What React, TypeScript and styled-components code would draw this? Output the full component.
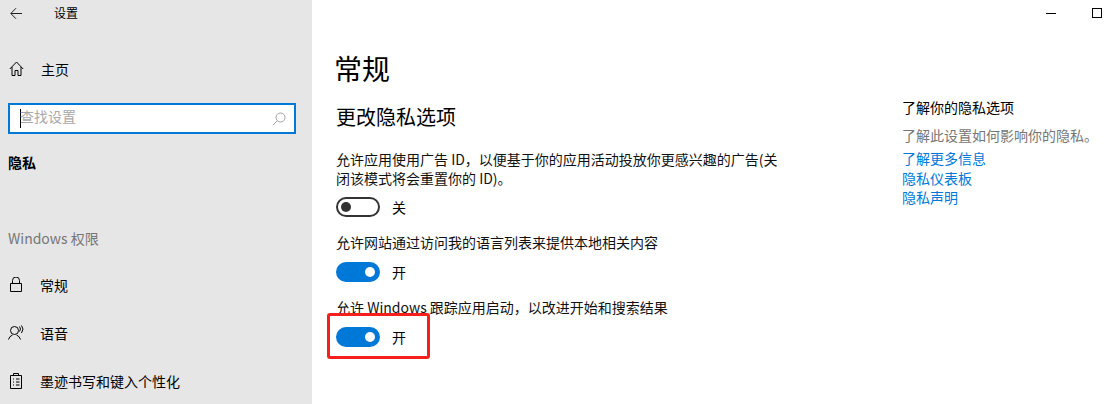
import React from 'react';
import styled, { createGlobalStyle } from 'styled-components';

const Global = createGlobalStyle`
  html, body { margin: 0; padding: 0; background: #fff; }
  body { font-family: "Noto Sans CJK SC", "Noto Sans", sans-serif; color: #000; overflow: hidden; }
`;

const Window = styled.div`
  display: flex;
  width: 1119px;
  height: 404px;
  overflow: hidden;
`;

const Sidebar = styled.nav`
  width: 312px;
  flex: none;
  height: 404px;
  background: #e6e6e6;
  display: flex;
  flex-direction: column;
  overflow: hidden;
`;

const TitleRow = styled.div`
  display: flex;
  align-items: center;
  height: 26px;
  padding-left: 10px;
  font-size: 12px;
  line-height: 26px;
`;

const AppTitle = styled.span`
  margin-left: 31px;
`;

const NavRow = styled.div<{ $top: number; $textGap: number }>`
  display: flex;
  align-items: center;
  height: 24px;
  margin-top: ${p => p.$top}px;
  padding-left: 8px;
  font-size: 14px;
  line-height: 24px;
  svg { flex: none; margin-right: ${p => p.$textGap}px; }
`;

const SearchBox = styled.div`
  display: flex;
  align-items: center;
  justify-content: space-between;
  box-sizing: border-box;
  width: 288px;
  height: 31px;
  margin: 22px 0 0 8px;
  padding: 0 8px 0 10px;
  background: #fff;
  border: 2px solid #0078d7;
`;

const Placeholder = styled.span`
  border-left: 1px solid #000;
  height: 19px;
  font-size: 14px;
  line-height: 15px;
  text-indent: -1px;
  color: #a8a8a8;
`;

const SectionName = styled.div`
  margin: 16px 0 0 8px;
  font-size: 14px;
  font-weight: 700;
  line-height: 24px;
`;

const GroupLabel = styled.div`
  margin: 52px 0 0 8px;
  font-family: "Noto Sans CJK SC", sans-serif;
  font-size: 14px;
  line-height: 24px;
  color: #767676;
`;

const Main = styled.main`
  flex: none;
  width: 442px;
  padding: 47px 0 0 24px;
`;

const PageTitle = styled.h1`
  margin: 0 0 0 -2px;
  font-size: 28px;
  font-weight: 400;
  line-height: 42px;
`;

const SubTitle = styled.h2`
  margin: 13px 0 0;
  font-size: 20px;
  font-weight: 400;
  line-height: 30px;
`;

const Setting = styled.section<{ $top: number }>`
  margin-top: ${p => p.$top}px;
`;

const SettingText = styled.p`
  margin: 0;
  font-size: 14px;
  line-height: 19px;
  color: #111;
`;

const ToggleRow = styled.div<{ $top: number }>`
  display: flex;
  align-items: center;
  gap: 12px;
  height: 20px;
  margin-top: ${p => p.$top}px;
  font-size: 14px;
`;

const ToggleRoot = styled.span<{ $on: boolean }>`
  position: relative;
  display: block;
  box-sizing: border-box;
  width: 44px;
  height: 20px;
  border-radius: 10px;
  background: ${p => (p.$on ? '#0078d7' : '#fff')};
  border: 2px solid ${p => (p.$on ? '#0078d7' : '#333')};
`;

const Knob = styled.span<{ $on: boolean }>`
  position: absolute;
  top: 3px;
  left: ${p => (p.$on ? '27px' : '3px')};
  width: 10px;
  height: 10px;
  border-radius: 50%;
  background: ${p => (p.$on ? '#fff' : '#333')};
`;

const Highlight = styled.div`
  position: absolute;
  left: 327px;
  top: 313px;
  width: 103px;
  height: 46px;
  box-sizing: border-box;
  border: 3px solid #f5201c;
  border-radius: 3px;
  pointer-events: none;
`;

const Aside = styled.aside`
  flex: none;
  width: 217px;
  margin-left: 124px;
`;

const WindowButtons = styled.div`
  display: flex;
  justify-content: flex-end;
  align-items: center;
  gap: 36px;
  height: 26px;
  padding-right: 17px;
`;

const MinimizeIcon = styled.span`
  display: block;
  width: 10px;
  height: 1px;
  background: #000;
`;

const MaximizeIcon = styled.span`
  display: block;
  box-sizing: border-box;
  width: 10px;
  height: 10px;
  border: 1px solid #000;
`;

const AsideTitle = styled.div`
  margin-top: 71px;
  font-size: 14px;
  line-height: 20px;
  white-space: nowrap;
`;

const AsideText = styled.div`
  margin-top: 8px;
  font-size: 14px;
  line-height: 20px;
  color: #767676;
  white-space: nowrap;
`;

const AsideLinks = styled.div`
  display: flex;
  flex-direction: column;
  margin-top: 4px;
`;

const AsideLink = styled.a`
  font-size: 14px;
  line-height: 19.5px;
  color: #0078d7;
`;

const Toggle = ({ on, top }: { on: boolean; top: number }) => (
  <ToggleRow $top={top}>
    <ToggleRoot $on={on}><Knob $on={on} /></ToggleRoot>
    {on ? '开' : '关'}
  </ToggleRow>
);

const line = { fill: 'none', stroke: '#000', strokeWidth: 1 };

export default function App() {
  return (
    <Window>
      <Global />
      <Sidebar>
        <TitleRow>
          <svg width="13" height="13" viewBox="0 0 13 13" {...line} stroke="#222">
            <path d="M12 6.5H1M6 1.2 .8 6.5 6 11.8" />
          </svg>
          <AppTitle>设置</AppTitle>
        </TitleRow>
        <NavRow $top={31} $textGap={17}>
          <svg width="16" height="16" viewBox="0 0 16 16" {...line}>
            <path d="M1.800 8 8.500 1l6.700 7M4 6v8.500h3V9.500h3v5h3V6" />
          </svg>
          主页
        </NavRow>
        <SearchBox>
          <Placeholder>查找设置</Placeholder>
          <svg width="14" height="14" viewBox="0 0 14 14" fill="none" stroke="#a0a0a0">
            <circle cx="8.5" cy="5.5" r="4.5" />
            <path d="M5.2 8.8.8 13.2" />
          </svg>
        </SearchBox>
        <SectionName>隐私</SectionName>
        <GroupLabel>Windows 权限</GroupLabel>
        <NavRow $top={23} $textGap={16}>
          <svg width="16" height="16" viewBox="0 0 16 16" {...line}>
            <path d="M2.500 6.500h11v8h-11zM4.500 6.500V3.500a3.500 3.500 0 0 1 7 0v3" />
          </svg>
          常规
        </NavRow>
        <NavRow $top={24} $textGap={15}>
          <svg width="17" height="16" viewBox="0 0 17 16" {...line}>
            <circle cx="6.500" cy="5.500" r="4" />
            <path d="M.5 14.500a6.500 6.500 0 0 1 4-4.500M8.500 10a6.500 6.500 0 0 1 4 4.500M11.500 1.500q2 2.500 0 5M13.500 .5q3 3.500 0 7.500" />
          </svg>
          语音
        </NavRow>
        <NavRow $top={24} $textGap={16}>
          <svg width="16" height="16" viewBox="0 0 16 16" {...line}>
            <path d="M2.500 2.500h11v13h-11zM5.500 2.500V.5h5v2M5 6h1M8 6h3.500M5 9h1M8 9h3.500M5 12h1M8 12h3.500" />
          </svg>
          墨迹书写和键入个性化
        </NavRow>
      </Sidebar>
      <Main>
        <PageTitle>常规</PageTitle>
        <SubTitle>更改隐私选项</SubTitle>
        <Setting $top={18}>
          <SettingText>
            允许应用使用广告 ID，以便基于你的应用活动投放你更感兴趣的广告(关闭该模式将会重置你的 ID)。
          </SettingText>
          <Toggle on={false} top={9} />
        </Setting>
        <Setting $top={16}>
          <SettingText>允许网站通过访问我的语言列表来提供本地相关内容</SettingText>
          <Toggle on top={10} />
        </Setting>
        <Setting $top={16}>
          <SettingText>允许 Windows 跟踪应用启动，以改进开始和搜索结果</SettingText>
          <Toggle on top={10} />
        </Setting>
      </Main>
      <Aside>
        <WindowButtons>
          <MinimizeIcon />
          <MaximizeIcon />
        </WindowButtons>
        <AsideTitle>了解你的隐私选项</AsideTitle>
        <AsideText>了解此设置如何影响你的隐私。</AsideText>
        <AsideLinks>
          <AsideLink>了解更多信息</AsideLink>
          <AsideLink>隐私仪表板</AsideLink>
          <AsideLink>隐私声明</AsideLink>
        </AsideLinks>
      </Aside>
      <Highlight />
    </Window>
  );
}
